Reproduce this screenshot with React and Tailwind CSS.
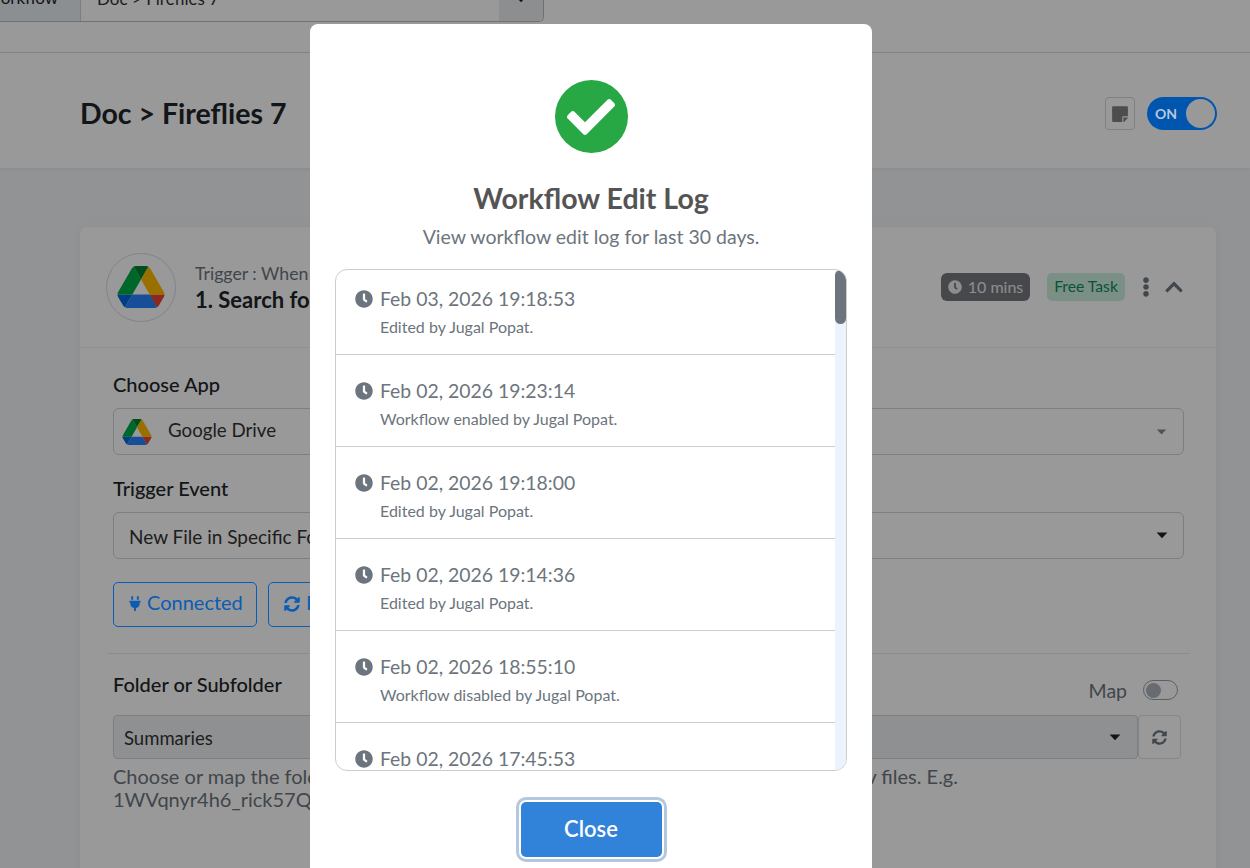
import React from "react";
import { FaClock, FaPlug, FaSyncAlt, FaCheck, FaStickyNote, FaEllipsisV, FaChevronUp } from "react-icons/fa";

const DriveLogo = ({ className }) => (
  <svg viewBox="0 0 87.3 78" className={className}>
    <path d="m6.6 66.85 3.85 6.65c.8 1.4 1.95 2.5 3.3 3.3l13.75-23.8h-27.5c0 1.55.4 3.1 1.2 4.5z" fill="#0066da" />
    <path d="m43.65 25-13.75-23.8c-1.35.8-2.5 1.9-3.3 3.3l-25.4 44a9.06 9.06 0 0 0 -1.2 4.5h27.5z" fill="#00ac47" />
    <path d="m73.55 76.8c1.35-.8 2.5-1.9 3.3-3.3l1.6-2.75 7.65-13.25c.8-1.4 1.2-2.95 1.2-4.5h-27.502l5.852 11.5z" fill="#ea4335" />
    <path d="m43.65 25 13.75-23.8c-1.35-.8-2.9-1.2-4.5-1.2h-18.5c-1.6 0-3.15.45-4.5 1.2z" fill="#00832d" />
    <path d="m59.8 53h-32.3l-13.75 23.8c1.35.8 2.9 1.2 4.5 1.2h50.8c1.6 0 3.15-.45 4.5-1.2z" fill="#2684fc" />
    <path d="m73.4 26.5-12.7-22c-.8-1.4-1.95-2.5-3.3-3.3l-13.75 23.8 16.15 28h27.45c0-1.55-.4-3.1-1.2-4.5z" fill="#ffba00" />
  </svg>
);

const Caret = ({ className }) => (
  <svg viewBox="0 0 12 7" className={className} fill="currentColor">
    <path d="M0.6 0.5h10.8L6 6.3z" />
  </svg>
);

const logs = [
  ["Feb 03, 2026 19:18:53", "Edited by Jugal Popat."],
  ["Feb 02, 2026 19:23:14", "Workflow enabled by Jugal Popat."],
  ["Feb 02, 2026 19:18:00", "Edited by Jugal Popat."],
  ["Feb 02, 2026 19:14:36", "Edited by Jugal Popat."],
  ["Feb 02, 2026 18:55:10", "Workflow disabled by Jugal Popat."],
  ["Feb 02, 2026 17:45:53", "Edited by Jugal Popat."],
];

export default function App() {
  return (
    <div className="relative h-[868px] w-[1250px] overflow-hidden bg-[#f3f5f7] font-['Lato',sans-serif] text-[#212529]">
      {/* top bar */}
      <div className="flex h-[53px] flex-col border-b border-[#d6e0f2] bg-white">
        <div className="-mt-[25px] flex h-[47px] w-[544px] shrink-0 items-stretch rounded-br-[5px] border-b border-r border-[#b8bec4]">
          <div className="flex w-[81px] items-center justify-end border-r border-[#ced4da] bg-[#e8eef3] pr-[22px] text-[17px]">orkflow</div>
          <div className="flex-1 pl-[16px] text-[17px] leading-[47px] text-[#333]">Doc &gt; Fireflies 7</div>
          <div className="flex w-[44px] justify-center rounded-br-[5px] bg-[#e9edf0] pt-[22px]">
            <Caret className="h-[6px] w-[10px] text-[#222]" />
          </div>
        </div>
      </div>

      {/* page title header */}
      <div className="flex h-[115px] items-center justify-between bg-white pl-[80px] pr-[33px] pt-[6px] shadow-[0_1px_4px_rgba(0,0,0,0.06)]">
        <h1 className="mb-[2px] text-[28.5px] font-bold leading-[36px] text-[#212529]">Doc &gt; Fireflies 7</h1>
        <div className="flex items-center gap-[12px]">
          <div className="flex h-[33px] w-[30px] items-center justify-center rounded-[4px] border border-[#d5d5d5]">
            <FaStickyNote className="h-[18px] w-[18px] text-[#808080]" />
          </div>
          <div className="relative z-10 flex h-[33px] w-[70px] items-center justify-between rounded-full bg-[#0056ae] pl-[8px] pr-[2px]">
            <span className="text-[14px] font-bold text-[#b8c8dc]">ON</span>
            <span className="h-[29px] w-[29px] rounded-full bg-[#999999]" />
          </div>
        </div>
      </div>

      {/* card */}
      <div className="ml-[80px] mt-[59px] h-[700px] w-[1136px] rounded-[8px] bg-white shadow-[0_2px_10px_rgba(0,0,0,0.06)]">
        <div className="flex h-[121px] items-center border-b border-[#eef0f3] pl-[26px] pr-[32px]">
          <div className="flex h-[69px] w-[70px] shrink-0 items-center justify-center rounded-full border border-[#d3dcec]">
            <DriveLogo className="h-[42px] w-[48px]" />
          </div>
          <div className="ml-[19px] flex-1 pt-[1px]">
            <div className="text-[17.7px] leading-[24px] text-[#6c757d]">Trigger : When this happens</div>
            <div className="text-[22px] font-bold leading-[28px] text-[#212529]">1. Search for a file</div>
          </div>
          <div className="flex h-[28px] w-[89px] items-center justify-center gap-[6px] rounded-[6px] bg-[#75797f] text-[16px] text-white/85">
            <FaClock className="h-[14px] w-[14px]" />
            10 mins
          </div>
          <div className="ml-[17px] flex h-[28px] w-[78px] items-center justify-center rounded-[5px] bg-[#cbeee0] text-[15.7px] text-[#0f8a5f]">Free Task</div>
          <FaEllipsisV className="ml-[14px] h-[20px] w-[14px] text-[#6f7680]" />
          <FaChevronUp className="ml-[11px] h-[20px] w-[20px] text-[#6f7680]" />
        </div>

        <div className="pl-[33px] pr-[32px] pt-[24px]">
          <div className="pb-[2px] text-[20px] font-medium leading-[24px]">Choose App</div>
          <div className="mt-[10px] flex h-[47px] items-center rounded-[6px] border border-[#ced4da] pl-[8px] pr-[16px]">
            <DriveLogo className="h-[26px] w-[30px]" />
            <span className="ml-[16px] flex-1 pb-[2px] text-[18.7px] text-[#333]">Google Drive</span>
            <Caret className="h-[6px] w-[11px] text-[#888]" />
          </div>
          <div className="mt-[21px] pb-[2px] text-[20px] font-medium leading-[24px]">Trigger Event</div>
          <div className="mt-[10px] flex h-[47px] items-center rounded-[6px] border border-[#ced4da] pl-[15px] pr-[15px]">
            <span className="flex-1 pt-[3px] text-[19px] text-[#333]">New File in Specific Folder</span>
            <Caret className="h-[7px] w-[12px] text-[#222]" />
          </div>
          <div className="relative z-10 mt-[23px] flex gap-[11px]">
            <div className="flex h-[45px] w-[144px] items-center gap-[6px] rounded-[5px] border border-[#0a5cb5] pb-[2px] pl-[15px] text-[20px] text-[#0a5cb5]">
              <FaPlug className="h-[15px] w-[12px]" />
              <span className="pb-[3px]">Connected</span>
            </div>
            <div className="flex h-[45px] w-[144px] items-center gap-[6px] rounded-[5px] border border-[#0a5cb5] pb-[2px] pl-[15px] text-[20px] text-[#0a5cb5]">
              <FaSyncAlt className="h-[16px] w-[16px]" />
              <span className="pb-[3px]">Refresh</span>
            </div>
          </div>
          <div className="-mx-[6px] mt-[26px] border-t border-[#e7ebf0]" />
          <div className="mt-[18px] flex h-[26px] items-start justify-between pr-[6px]">
            <span className="pb-[2px] text-[20px] font-medium leading-[24px]">Folder or Subfolder</span>
            <div className="flex items-start gap-[16px]">
              <span className="mt-[6px] text-[19.5px] leading-[26px] text-[#6c757d]">Map</span>
              <div className="mt-[8px] flex h-[20px] w-[35px] items-center rounded-full border border-[#9aa0a6] bg-white pl-[2px]">
                <span className="h-[15px] w-[15px] rounded-full bg-[#adb5bd]" />
              </div>
            </div>
          </div>
          <div className="mt-[17px] flex h-[44px] pr-[3px]">
            <div className="flex flex-1 items-center rounded-[4px] border border-[#ced4da] bg-[#eef0f3] pl-[10px] pr-[16px]">
              <span className="flex-1 pt-[4px] text-[18.5px] text-[#333]">Summaries</span>
              <Caret className="h-[7px] w-[12px] text-[#222]" />
            </div>
            <div className="flex w-[43px] items-center justify-center rounded-[4px] border border-[#dde1e5]">
              <FaSyncAlt className="h-[15px] w-[15px] text-[#6f7680]" />
            </div>
          </div>
          <div className="mt-[6px] text-[20px] leading-[23px] text-[#6c757d]">
            <div className="flex justify-between pr-[226px]"><span>Choose or map the folder</span><span>v files. E.g.</span></div>
            <div>1WVqnyr4h6_rick57QW</div>
          </div>
        </div>
      </div>

      {/* overlay */}
      <div className="absolute inset-0 bg-black/40" />

      {/* modal */}
      <div className="absolute left-[310px] top-[24px] z-20 flex h-[880px] w-[562px] flex-col items-center rounded-[8px] bg-white px-[25px] pt-[56px]">
        <div className="flex h-[73px] w-[73px] items-center justify-center rounded-full bg-[#28a745]">
          <FaCheck className="h-[48px] w-[48px] text-white" />
        </div>
        <h2 className="mt-[27px] text-[28.5px] font-bold leading-[36px] text-[#545454]">Workflow Edit Log</h2>
        <p className="mt-[8px] text-[19.5px] leading-[26px] text-[#6c757d]">View workflow edit log for last 30 days.</p>

        <div className="mt-[19px] flex h-[502px] w-[512px] overflow-hidden rounded-[12px] border border-[#cccccc]">
          <div className="-mt-[7px] flex-1">
            {logs.map(([date, who]) => (
              <div key={date} className="h-[92px] border-b border-[#cccccc] pl-[19px] pt-[24px]">
                <div className="flex h-[24px] items-center gap-[7px] text-[19.4px] text-[#6c757d]">
                  <FaClock className="h-[18px] w-[18px]" />
                  {date}
                </div>
                <div className="ml-[25px] mt-[6px] text-[16px] leading-[20px] text-[#6c757d]">{who}</div>
              </div>
            ))}
          </div>
          <div className="w-[11px] shrink-0 bg-[#ebf4fd]">
            <div className="h-[54px] w-[11px] rounded-full bg-[#6c757d]" />
          </div>
        </div>

        <button className="mt-[31px] h-[55px] w-[141px] rounded-[5px] bg-[#3182d9] pb-[2px] text-[22px] font-semibold text-white shadow-[0_0_0_2px_#ffffff,0_0_0_5px_#b3c7de]">Close</button>
      </div>
    </div>
  );
}
